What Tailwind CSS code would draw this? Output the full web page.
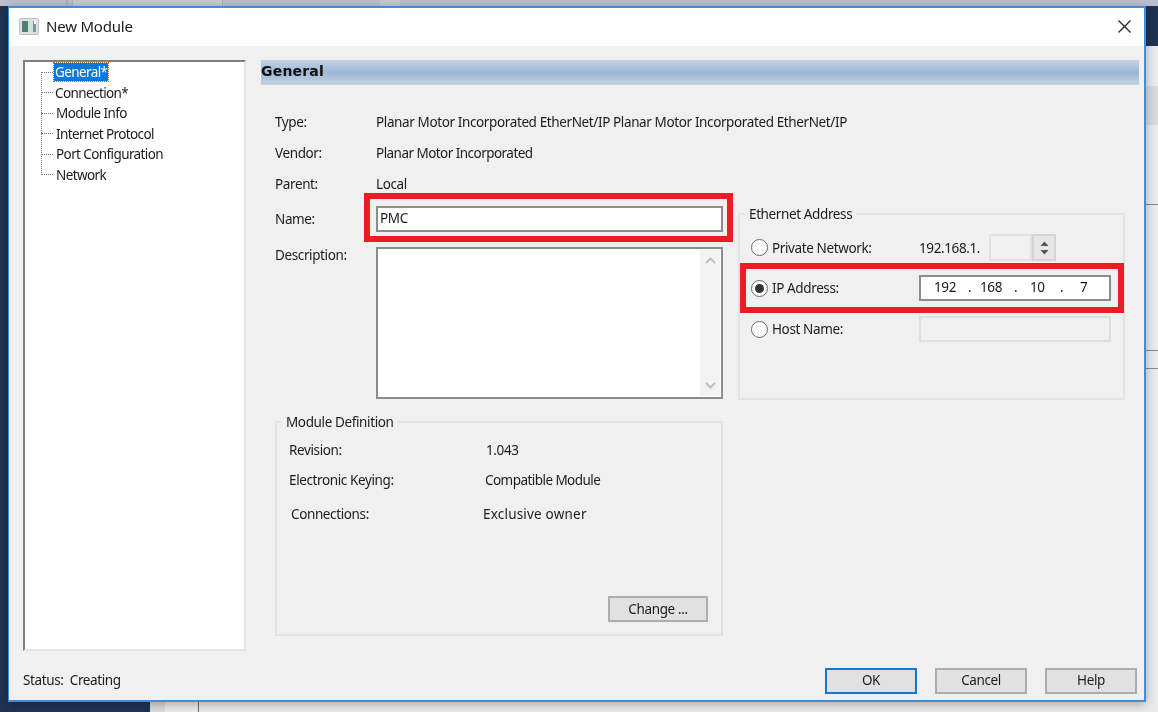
<!DOCTYPE html>
<html>
<head>
<meta charset="utf-8">
<title>New Module</title>
<script src="https://cdn.jsdelivr.net/npm/@tailwindcss/browser@4"></script>
</head>
<body class="m-0 overflow-hidden">
<div class="relative w-[1158px] h-[712px] overflow-hidden blur-[0.35px] bg-[#ebebeb] font-['Noto_Sans',sans-serif] text-[13.5px] leading-[20px] tracking-[-0.38px] text-[#1c1c1c]">
  <!-- desktop behind the dialog -->
  <div class="absolute left-0 top-0 w-full h-[8px] bg-[#bcc0d0]"></div>
  <div class="absolute left-[72px] top-0 w-[151px] h-[7px] bg-[#c7cad8] border-x border-[#aeb2c2]"></div>
  <div class="absolute left-[66px] top-0 w-[2px] h-[7px] bg-[#aeb2c2]"></div>
  <div class="absolute left-[380px] top-0 w-[20px] h-[7px] bg-[#c7cad8]"></div>
  <div class="absolute left-0 top-[6px] w-[10px] h-[706px] bg-[#1f3352]"></div>
  <div class="absolute left-0 top-[700px] w-[150px] h-[12px] bg-[#1f3352]"></div>
  <div class="absolute left-[150px] top-[700px] w-[15px] h-[12px] bg-[#dcdcdc]"></div>
  <div class="absolute left-[198px] top-[700px] w-[1px] h-[12px] bg-[#6f6f6f]"></div>
  <div class="absolute right-0 top-[6px] w-[14px] h-[40px] bg-[#1f3352]"></div>
  <div class="absolute right-0 top-[86px] w-[14px] h-[39px] bg-[#dadada]"></div>
  <div class="absolute right-0 top-[204px] w-[14px] h-[1px] bg-[#8a8a8a]"></div>
  <div class="absolute right-0 top-[350px] w-[14px] h-[1px] bg-[#8a8a8a]"></div>
  <div class="absolute right-0 top-[368px] w-[14px] h-[1px] bg-[#8a8a8a]"></div>

  <!-- dialog window -->
  <div class="absolute left-[8px] top-[6px] w-[1138px] h-[696px] flex flex-col bg-[#f0f0f0] border-t-2 border-r-2 border-b-2 border-l border-[#3d8fdd] shadow-[0_2px_10px_rgba(0,0,0,0.3)]">
    <!-- title bar -->
    <div class="h-[38px] shrink-0 bg-white flex items-center">
      <svg class="ml-[10px] -mt-[1px]" width="20" height="17" viewBox="0 0 20 17">
        <rect x="0.5" y="0.5" width="19" height="16" rx="1" fill="#e2e2e2" stroke="#bdbdbd"/>
        <rect x="3" y="3" width="6" height="11" fill="#4f7d78"/>
        <rect x="9" y="3" width="5" height="11" fill="#cfe3d6"/>
        <rect x="14" y="3" width="3" height="11" fill="#7f8fa0"/>
        <rect x="15" y="3" width="2" height="3" fill="#ffffff"/>
      </svg>
      <span class="ml-[7px] text-[15px] tracking-[-0.2px] -mt-[3px]">New Module</span>
      <svg class="ml-auto mr-[12px] -mt-[1px]" width="15" height="15" viewBox="0 0 15 15">
        <path d="M1.5 1.5 13.5 13.5M13.5 1.5 1.5 13.5" fill="none" stroke="#2b2b2b" stroke-width="1.4"/>
      </svg>
    </div>

    <!-- main -->
    <div class="flex pt-[14px] pl-[14px]">
      <!-- tree -->
      <div class="relative w-[223px] h-[591px] bg-white tracking-[-0.6px] border-2 border-t-[#7f7f7f] border-l-[#7f7f7f] border-r-[#e4e4e4] border-b-[#e4e4e4]">
        <div class="absolute left-[16px] top-[10px] h-[103px] border-l border-dotted border-[#777]"></div>
        <div class="relative h-[20.5px] pl-[29px] flex items-center">
          <span class="absolute left-[16px] w-[12px] border-t border-dotted border-[#777]"></span>
          <span class="bg-[#0a78dc] text-white px-[1px] outline outline-1 outline-dotted outline-[#b56a1c] leading-[18px]">General*</span>
        </div>
        <div class="relative h-[20.5px] pl-[30px] flex items-center"><span class="absolute left-[16px] w-[12px] border-t border-dotted border-[#777]"></span><span>Connection*</span></div>
        <div class="relative h-[20.5px] pl-[31px] flex items-center"><span class="absolute left-[16px] w-[12px] border-t border-dotted border-[#777]"></span><span>Module Info</span></div>
        <div class="relative h-[20.5px] pl-[31px] flex items-center"><span class="absolute left-[16px] w-[12px] border-t border-dotted border-[#777]"></span><span>Internet Protocol</span></div>
        <div class="relative h-[20.5px] pl-[31px] flex items-center"><span class="absolute left-[16px] w-[12px] border-t border-dotted border-[#777]"></span><span>Port Configuration</span></div>
        <div class="relative h-[20.5px] pl-[31px] flex items-center"><span class="absolute left-[16px] w-[12px] border-t border-dotted border-[#777]"></span><span>Network</span></div>
      </div>

      <!-- panel -->
      <div class="ml-[15px] w-[878px] flex flex-col">
        <div class="h-[25px] flex items-center pb-[4px] bg-linear-to-b from-[#c3d3e4] via-[#9db8d5] to-[#c3d3e4] font-['DejaVu_Sans',sans-serif] font-bold text-[14px] tracking-[0.2px] text-[#111]">General</div>

        <div class="pl-[14px] pt-[27px] flex flex-col gap-[11px]">
          <div class="flex"><span class="w-[101px]">Type:</span><span>Planar Motor Incorporated EtherNet/IP Planar Motor Incorporated EtherNet/IP</span></div>
          <div class="flex"><span class="w-[101px]">Vendor:</span><span class="tracking-[-0.54px]">Planar Motor Incorporated</span></div>
          <div class="flex"><span class="w-[101px]">Parent:</span><span>Local</span></div>
        </div>

        <div class="pl-[14px] flex">
          <!-- left column -->
          <div class="w-[448px] flex flex-col">
            <div class="pt-[12px] flex items-center">
              <span class="w-[101px]">Name:</span>
              <div class="relative w-[347px] h-[26px] bg-white border-2 border-[#8c8c8c] flex items-center pl-[2px]">
                <span class="-mt-[2px]">PMC</span>
                <div class="absolute -left-[14px] -right-[12px] -top-[15px] -bottom-[12px] border-[6px] border-[#ed1c24]"></div>
              </div>
            </div>
            <div class="mt-[15px] flex">
              <span class="w-[101px] -mt-[2px]">Description:</span>
              <div class="w-[347px] h-[152px] bg-white border-2 border-[#8c8c8c] flex justify-end p-[1px] pr-[1px]">
                <div class="w-[20px] h-full bg-[#f3f3f3] flex flex-col justify-between items-center py-[7px]">
                  <svg width="11" height="7" viewBox="0 0 11 7"><path d="M1 6 5.5 1.5 10 6" fill="none" stroke="#bdbdbd" stroke-width="2"/></svg>
                  <svg width="11" height="7" viewBox="0 0 11 7"><path d="M1 1 5.5 5.5 10 1" fill="none" stroke="#bdbdbd" stroke-width="2"/></svg>
                </div>
              </div>
            </div>
            <div class="relative mt-[22px] h-[215px] border-2 border-[#e3e3e3] pt-[17px] pl-[12px] flex flex-col">
              <span class="absolute left-[5px] -top-[11px] bg-[#f0f0f0] px-[4px]">Module Definition</span>
              <div class="flex"><span class="w-[197px]">Revision:</span><span>1.043</span></div>
              <div class="flex mt-[10px]"><span class="w-[196px]">Electronic Keying:</span><span class="tracking-[-0.55px]">Compatible Module</span></div>
              <div class="flex mt-[14px] pl-[2px]"><span class="w-[192px]">Connections:</span><span class="tracking-[0.2px]">Exclusive owner</span></div>
              <div class="mt-auto mb-[12px] mr-[13px] self-end w-[100px] h-[26px] bg-[#e1e1e1] border-2 border-[#adadad] flex items-center justify-center">Change ...</div>
            </div>
          </div>

          <!-- right column -->
          <div class="relative ml-[15px] mt-[19px] w-[387px] h-[187px] border-2 border-[#e3e3e3] pl-[11px] pt-[19px] flex flex-col">
            <span class="absolute left-[5px] -top-[11px] bg-[#f0f0f0] px-[4px]">Ethernet Address</span>

            <div class="flex items-center h-[27px]">
              <div class="w-[17px] h-[17px] rounded-full border-[1.5px] border-[#666] bg-white"></div>
              <span class="ml-[4px] w-[147px]">Private Network:</span>
              <span class="w-[70px]">192.168.1.</span>
              <div class="flex h-[27px]">
                <div class="w-[43px] border-2 border-[#e2e2e2] bg-[#f0f0f0]"></div>
                <div class="w-[24px] border-2 border-[#d4d4d4] bg-[#e6e6e6] flex flex-col items-center justify-center gap-[4px]">
                  <svg width="9" height="5" viewBox="0 0 9 5"><path d="M0.5 5 4.5 0.5 8.5 5Z" fill="#555"/></svg>
                  <svg width="9" height="5" viewBox="0 0 9 5"><path d="M0.5 0 4.5 4.5 8.5 0Z" fill="#555"/></svg>
                </div>
              </div>
            </div>

            <div class="flex items-center h-[26px] mt-[14px]">
              <div class="w-[17px] h-[17px] rounded-full border-[1.5px] border-[#666] bg-white flex items-center justify-center">
                <div class="w-[9px] h-[9px] rounded-full bg-[#333]"></div>
              </div>
              <span class="ml-[4px] w-[147px]">IP Address:</span>
              <div class="relative w-[192px] h-[26px] bg-white border-2 border-[#8c8c8c] flex items-center">
                <span class="absolute left-[13px] top-0">192</span>
                <span class="absolute left-[47px] top-0">.</span>
                <span class="absolute left-[59px] top-0">168</span>
                <span class="absolute left-[93px] top-0">.</span>
                <span class="absolute left-[109px] top-0">10</span>
                <span class="absolute left-[139px] top-0">.</span>
                <span class="absolute left-[159px] top-0">7</span>
                <div class="absolute -left-[181px] -right-[15px] -top-[14px] -bottom-[14px] border-[6px] border-[#ed1c24]"></div>
              </div>
            </div>

            <div class="flex items-center h-[26px] mt-[15px]">
              <div class="w-[17px] h-[17px] rounded-full border-[1.5px] border-[#666] bg-white"></div>
              <span class="ml-[4px] w-[147px]">Host Name:</span>
              <div class="w-[192px] h-[26px] border-2 border-[#dedede] bg-[#f0f0f0]"></div>
            </div>
          </div>
        </div>
      </div>
    </div>

    <!-- footer -->
    <div class="mt-[17px] pl-[14px] pr-[7px] flex items-center">
      <span class="-mt-[2px]">Status:&nbsp; Creating</span>
      <div class="ml-auto flex gap-[18px]">
        <div class="w-[92px] h-[26px] pb-[2px] bg-[#e1e1e1] border-2 border-[#0a78dc] flex items-center justify-center">OK</div>
        <div class="w-[92px] h-[26px] pb-[2px] bg-[#e1e1e1] border-2 border-[#adadad] flex items-center justify-center">Cancel</div>
        <div class="w-[92px] h-[26px] pb-[2px] bg-[#e1e1e1] border-2 border-[#adadad] flex items-center justify-center">Help</div>
      </div>
    </div>
  </div>
</div>
</body>
</html>
